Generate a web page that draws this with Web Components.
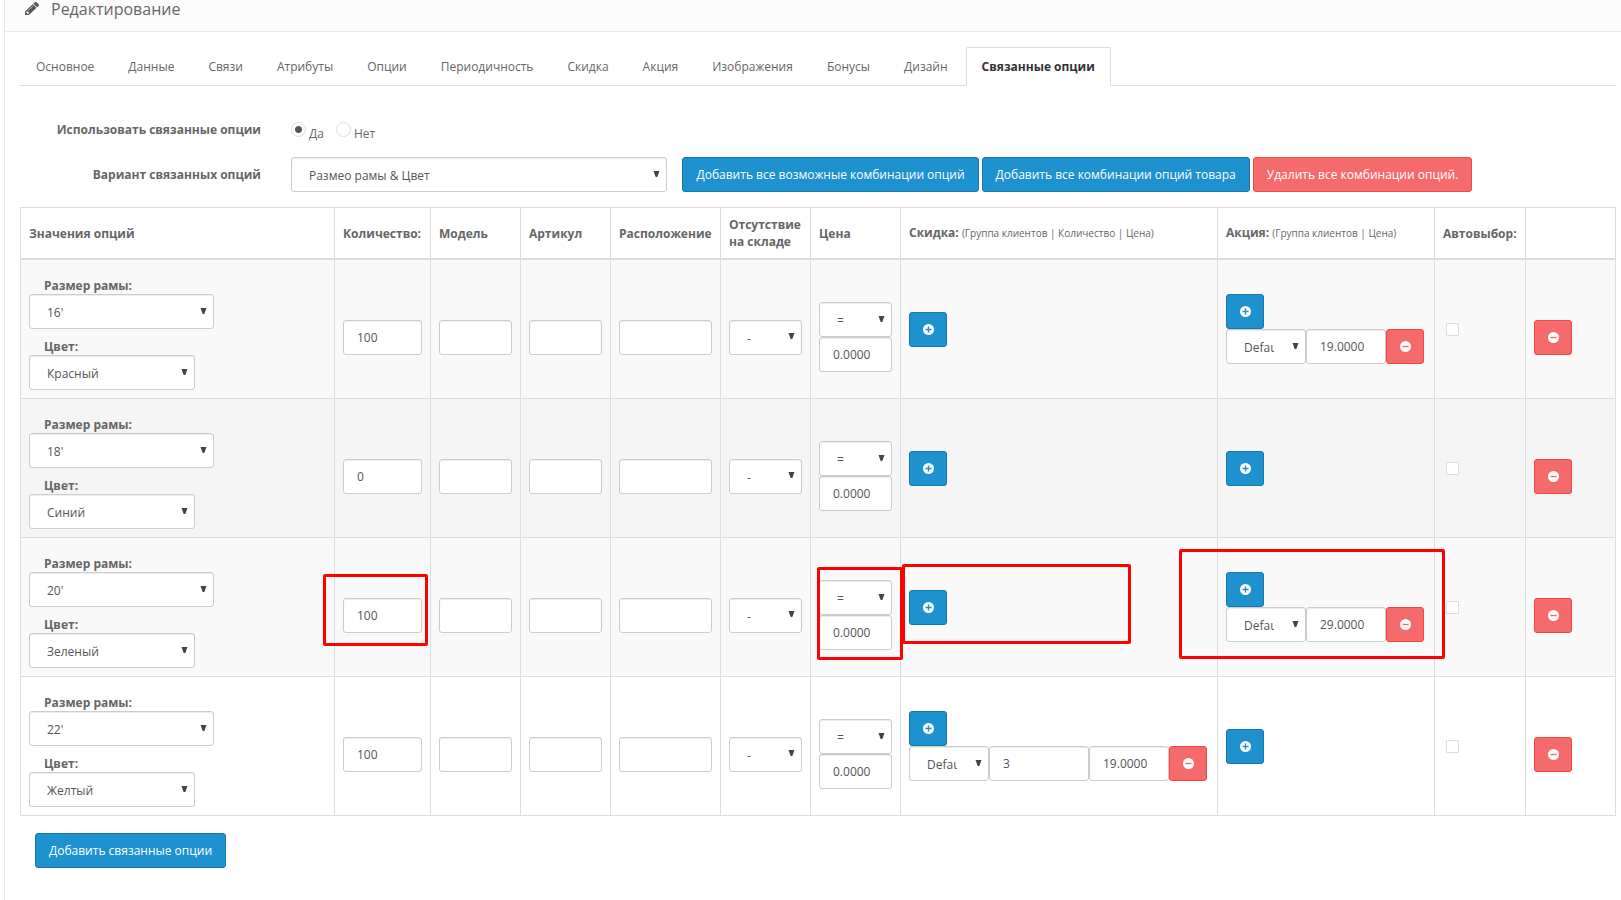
<!DOCTYPE html>
<html lang="ru">
<head>
<meta charset="utf-8">
<title>Редактирование</title>
<style>
  body { margin: 0; background: #fff; color: #666; font: 12px/17px "Open Sans", "Noto Sans", sans-serif; }
</style>
</head>
<body>
<edit-panel heading="Редактирование">
  <tab-bar items="Основное,Данные,Связи,Атрибуты,Опции,Периодичность,Скидка,Акция,Изображения,Бонусы,Дизайн,Связанные опции" active="11"></tab-bar>
  <linked-settings></linked-settings>
  <options-table></options-table>
  <action-button class="add">Добавить связанные опции</action-button>
</edit-panel>

<script>
const CONTROLS = `
  *, *::before, *::after { box-sizing: border-box; }
  input, select, button { font: inherit; margin: 0; }
  input[type=text], select {
    display: block; width: 100%; height: 35px; padding: 8px 13px;
    color: #555; background: #fff; border: 1px solid #ccc; border-radius: 3px;
    box-shadow: inset 0 1px 1px rgba(0,0,0,.075);
  }
  select { appearance: none; padding: 9px 31px 7px 17px; line-height: 17px; }
  .pick { display: grid; }
  .pick > * { grid-area: 1 / 1; }
  .pick > svg { justify-self: end; align-self: center; margin: 0 7px 2px 0; pointer-events: none; }
  label { font-weight: 700; }
`;
const ARROW = '<svg width="7" height="6" viewBox="0 0 7 6" aria-hidden="true"><path d="M.5 0h6L4.300 6H2.700z" fill="#444"/></svg>';
const picker = (value, attrs) => `<div class="pick"><select ${attrs}><option>${value}</option></select>${ARROW}</div>`;

class EditPanel extends HTMLElement {
  constructor() {
    super();
    this.attachShadow({ mode: 'open' }).innerHTML = `
      <style>
        :host { display: block; box-sizing: border-box; min-height: 100vh; margin-left: 4px; border-left: 1px solid #e8e8e8; }
        header { display: flex; align-items: flex-start; gap: 12px; padding: 0 20px 13px; background: #fcfcfc; border-bottom: 1px solid #e8e8e8; }
        h1 { margin: 0; font-size: 16px; line-height: 18px; font-weight: 400; }
        svg { display: block; margin-top: 2px; }
        main { padding: 15px 5px 15px 15px; }
        ::slotted(.add) { margin: 17px 0 0 15px; }
      </style>
      <header>
        <svg width="14" height="13" viewBox="0 0 1515 1515" preserveAspectRatio="none" aria-hidden="true"><path fill="#555" d="M363 1387l91-91-235-235-91 91v107h128v128h107zm523-928q0-22-22-22-10 0-17 7l-542 542q-7 7-7 17 0 22 22 22 10 0 17-7l542-542q7-7 7-17zm-54-192l416 416-832 832H0v-416zm683 96q0 53-37 90l-166 166-416-416 166-165q36-38 90-38 53 0 91 38l235 234q37 39 37 91z"/></svg>
        <h1></h1>
      </header>
      <main><slot></slot></main>`;
    this.shadowRoot.querySelector('h1').textContent = this.getAttribute('heading');
  }
}

class TabBar extends HTMLElement {
  constructor() {
    super();
    const active = Number(this.getAttribute('active'));
    const tabs = this.getAttribute('items').split(',')
      .map((t, i) => `<a href="#tab-${i}"${i === active ? ' class="active" aria-current="page"' : ''}>${t}</a>`).join('');
    this.attachShadow({ mode: 'open' }).innerHTML = `
      <style>
        :host { display: block; }
        nav { display: flex; gap: 2px; border-bottom: 1px solid #ddd; }
        a { padding: 10px 15px; margin-bottom: -1px; border: 1px solid transparent; border-radius: 2px 2px 0 0; color: #666; text-decoration: none; white-space: nowrap; }
        .active { color: #333; font-weight: 700; background: #fff; border-color: #ddd #ddd #fff; }
      </style>
      <nav>${tabs}</nav>`;
  }
}

class ActionButton extends HTMLElement {
  constructor() {
    super();
    this.attachShadow({ mode: 'open' }).innerHTML = `
      <style>${CONTROLS}
        :host { display: block; width: max-content; }
        button { display: block; height: 35px; padding: 8px 13px; color: #fff; line-height: 17px; white-space: nowrap;
          background: #1e91cf; border: 1px solid #1978ab; border-radius: 3px; cursor: pointer; }
        :host([kind=danger]) button { background: #f56b6b; border-color: #f24545; }
      </style>
      <button type="button"><slot></slot></button>`;
  }
}

class IconButton extends HTMLElement {
  constructor() {
    super();
    const add = this.getAttribute('icon') === 'plus';
    this.attachShadow({ mode: 'open' }).innerHTML = `
      <style>${CONTROLS}
        :host { display: block; width: 38px; flex: none; }
        button { display: grid; place-items: center; width: 38px; height: 35px; padding: 0; border-radius: 3px; cursor: pointer;
          background: ${add ? '#1e91cf' : '#f56b6b'}; border: 1px solid ${add ? '#1978ab' : '#f24545'}; }
      </style>
      <button type="button" aria-label="${add ? 'Добавить' : 'Удалить'}">
        <svg width="11" height="11" viewBox="0 0 11 11" aria-hidden="true">
          <circle cx="5.500" cy="5.500" r="5.500" fill="#fff"/>
          <path d="M2.500 5.500h6${add ? 'M5.500 2.500v6' : ''}" stroke="${add ? '#1e91cf' : '#f56b6b'}" stroke-width="1.400"/>
        </svg>
      </button>`;
  }
}

class TextField extends HTMLElement {
  constructor() {
    super();
    this.attachShadow({ mode: 'open' }).innerHTML = `
      <style>${CONTROLS} :host { display: block; }</style>
      <input type="text" aria-label="${this.getAttribute('name')}" value="${this.getAttribute('value') || ''}">`;
  }
}

class SelectField extends HTMLElement {
  constructor() {
    super();
    const label = this.getAttribute('label');
    const value = this.getAttribute('value');
    this.attachShadow({ mode: 'open' }).innerHTML = `
      <style>${CONTROLS}
        :host { display: block; }
        label { display: block; padding: 9px 0 0 15px; }
      </style>
      ${label ? `<label for="s">${label}</label>` + picker(value, 'id="s"')
              : picker(value, `aria-label="${this.getAttribute('name')}"`)}`;
  }
}

class LinkedSettings extends HTMLElement {
  constructor() {
    super();
    this.attachShadow({ mode: 'open' }).innerHTML = `
      <style>${CONTROLS}
        :host { display: grid; gap: 10px 30px; margin: 26px 0 15px;
          grid-template-columns: calc((100% + 30px) / 6 - 30px) calc((100% + 30px) / 4 - 30px) 1fr; }
        .name { padding-top: 9px; text-align: right; font-weight: 700; }
        .radios { grid-column: 2 / 4; display: flex; gap: 12px; height: 35px; padding-top: 10px; }
        .radios label { display: flex; gap: 3px; font-weight: 400; }
        .radios span { padding-top: 3px; }
        input[type=radio] { appearance: none; width: 15px; height: 15px; border: 1px solid #ddd; border-radius: 50%; background: #fff; }
        input[type=radio]:checked { background: radial-gradient(circle, #555 3px, #fff 4px); }
        .buttons { display: flex; flex-wrap: wrap; gap: 3px; margin-left: -15px; }
      </style>
      <div class="name" id="use">Использовать связанные опции</div>
      <div class="radios" role="radiogroup" aria-labelledby="use">
        <label><input type="radio" name="use" checked><span>Да</span></label>
        <label><input type="radio" name="use"><span>Нет</span></label>
      </div>
      <label class="name" for="variant">Вариант связанных опций</label>
      ${picker('Размео рамы &amp; Цвет', 'id="variant"')}
      <div class="buttons">
        <action-button>Добавить все возможные комбинации опций</action-button>
        <action-button>Добавить все комбинации опций товара</action-button>
        <action-button kind="danger">Удалить все комбинации опций.</action-button>
      </div>`;
  }
}

const ROWS = [
  { size: "16'", color: 'Красный', qty: 100, special: '19.0000' },
  { size: "18'", color: 'Синий', qty: 0, hover: true },
  { size: "20'", color: 'Зеленый', qty: 100, special: '29.0000', marked: true },
  { size: "22'", color: 'Желтый', qty: 100, discount: ['3', '19.0000'] },
];

class OptionsTable extends HTMLElement {
  constructor() {
    super();
    const group = fields => `<div class="group"><select-field class="w80" name="Группа клиентов" value="Default"></select-field>${fields}<icon-button icon="minus"></icon-button></div>`;
    const field = (cls, name, value) => `<text-field class="${cls}" name="${name}" value="${value}"></text-field>`;
    const row = r => {
      const mark = name => r.marked ? `<i class="mark ${name}"></i>` : '';
      return `<tr${r.hover ? ' class="hover"' : ''}>
        <td><select-field class="size" label="Размер рамы:" value="${r.size}"></select-field>
            <select-field class="color" label="Цвет:" value="${r.color}"></select-field></td>
        <td class="low">${field('', 'Количество', r.qty)}${mark('qty')}</td>
        <td class="low">${field('', 'Модель', '')}</td>
        <td class="low">${field('', 'Артикул', '')}</td>
        <td class="low">${field('', 'Расположение', '')}</td>
        <td class="low"><select-field name="Отсутствие на складе" value="-"></select-field></td>
        <td class="low"><select-field name="Префикс цены" value="="></select-field>${field('', 'Цена', '0.0000')}${mark('price')}</td>
        <td><icon-button icon="plus"></icon-button>${r.discount ? group(field('w100', 'Количество', r.discount[0]) + field('w80', 'Цена', r.discount[1])) : ''}${mark('discount')}</td>
        <td><icon-button icon="plus"></icon-button>${r.special ? group(field('w80', 'Цена', r.special)) : ''}${mark('special')}</td>
        <td><input type="checkbox" aria-label="Автовыбор"></td>
        <td class="low"><icon-button icon="minus"></icon-button></td>
      </tr>`;
    };
    const cols = [0, 96, 90, 90, 110, 90, 90, 317, 217, 91, 90];
    this.attachShadow({ mode: 'open' }).innerHTML = `
      <style>${CONTROLS}
        :host { display: block; }
        table { width: 100%; table-layout: fixed; border-collapse: collapse; }
        th, td { position: relative; padding: 8px; border: 1px solid #ddd; vertical-align: middle; text-align: left; }
        th { border-bottom-width: 2px; }
        th small { font-size: 10px; font-weight: 400; }
        tbody tr:nth-child(odd) { background: #f9f9f9; }
        tbody tr.hover { background: #f5f5f5; }
        td.low { padding-top: 24px; }
        .size { width: 185px; }
        .color { width: 166px; }
        .group { display: flex; }
        .w80 { width: 80px; flex: none; }
        .w100 { width: 100px; flex: none; }
        input[type=checkbox] { appearance: none; display: block; width: 13px; height: 13px; margin-left: 3px; border: 1px solid #ddd; border-radius: 1px; background: #fff; }
        .mark { position: absolute; z-index: 1; border: 3px solid #f00; border-radius: 2px; pointer-events: none; }
        .mark.qty { left: -12px; top: 36px; width: 105px; height: 72px; }
        .mark.price { left: 6px; top: 29px; width: 86px; height: 93px; }
        .mark.discount { left: 1px; top: 26px; width: 229px; height: 80px; }
        .mark.special { left: -39px; top: 11px; width: 266px; height: 110px; }
      </style>
      <table>
        <colgroup>${cols.map(w => w ? `<col style="width:${w}px">` : '<col>').join('')}</colgroup>
        <thead><tr>
          <th>Значения опций</th><th>Количество:</th><th>Модель</th><th>Артикул</th><th>Расположение</th>
          <th>Отсутствие на складе</th><th>Цена</th>
          <th>Скидка: <small>(Группа клиентов | Количество | Цена)</small></th>
          <th>Акция: <small>(Группа клиентов | Цена)</small></th>
          <th>Автовыбор:</th><th></th>
        </tr></thead>
        <tbody>${ROWS.map(row).join('')}</tbody>
      </table>`;
  }
}

customElements.define('action-button', ActionButton);
customElements.define('icon-button', IconButton);
customElements.define('text-field', TextField);
customElements.define('select-field', SelectField);
customElements.define('tab-bar', TabBar);
customElements.define('linked-settings', LinkedSettings);
customElements.define('options-table', OptionsTable);
customElements.define('edit-panel', EditPanel);
</script>
</body>
</html>
